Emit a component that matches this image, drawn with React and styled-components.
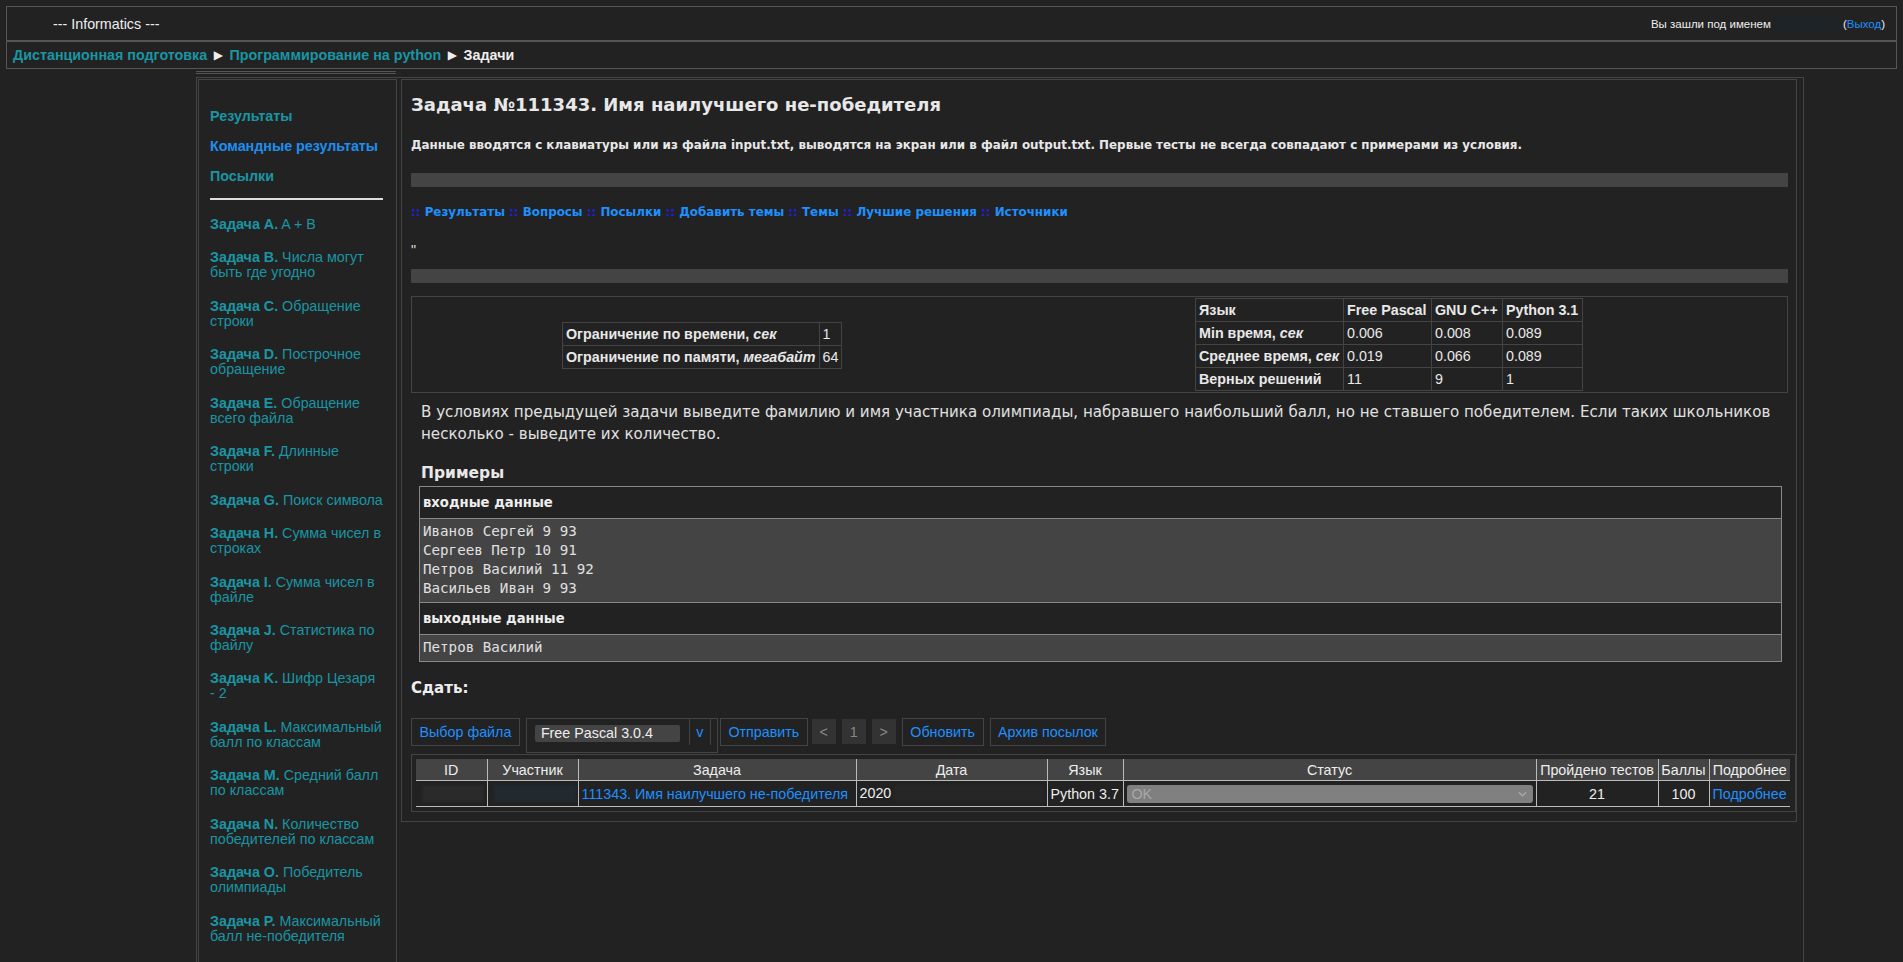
import React from "react";
import styled, { createGlobalStyle } from "styled-components";

const GlobalStyle = createGlobalStyle`
  html, body {
    margin: 0;
    padding: 0;
    background: #222222;
  }
  body {
    font-family: "Liberation Sans", Arial, sans-serif;
    font-size: 14.3px;
    color: #dddddd;
  }
  a {
    text-decoration: none;
    cursor: pointer;
  }
`;

const tasks = [
  ["A", "A + B"],
  ["B", "Числа могут быть где угодно"],
  ["C", "Обращение строки"],
  ["D", "Построчное обращение"],
  ["E", "Обращение всего файла"],
  ["F", "Длинные строки"],
  ["G", "Поиск символа"],
  ["H", "Сумма чисел в строках"],
  ["I", "Сумма чисел в файле"],
  ["J", "Статистика по файлу"],
  ["K", "Шифр Цезаря", "- 2"],
  ["L", "Максимальный балл по классам"],
  ["M", "Средний балл по классам"],
  ["N", "Количество победителей по классам"],
  ["O", "Победитель олимпиады"],
  ["P", "Максимальный балл не-победителя"],
];

const probLinks = ["Результаты", "Вопросы", "Посылки", "Добавить темы", "Темы", "Лучшие решения", "Источники"];

const sampleIn = ["Иванов Сергей 9 93", "Сергеев Петр 10 91", "Петров Василий 11 92", "Васильев Иван 9 93"];

const stats = [
  ["Min время, ", "сек", "0.006", "0.008", "0.089"],
  ["Среднее время, ", "сек", "0.019", "0.066", "0.089"],
  ["Верных решений", "", "11", "9", "1"],
];

const cols = [
  ["ID", 71],
  ["Участник", 91],
  ["Задача", 278],
  ["Дата", 191],
  ["Язык", 76],
  ["Статус", 413],
  ["Пройдено тестов", 122],
  ["Баллы", 51],
  ["Подробнее", 81],
];

const App = () => {
  return (
    <>
      <GlobalStyle />
      <Header>
        <SiteName>--- Informatics ---</SiteName>
        <Login>
          Вы зашли под именем <Hidden w={66} h={14} />
          (<BlueLink>Выход</BlueLink>)
        </Login>
      </Header>
      <Crumbs>
        <TealLink>Дистанционная подготовка</TealLink>
        <Arrow>▶</Arrow>
        <TealLink>Программирование на python</TealLink>
        <Arrow>▶</Arrow>
        <span>Задачи</span>
      </Crumbs>
      <BlockHead />
      <Wrapper>
        <SideBox>
          <MenuLink>Результаты</MenuLink>
          <MenuLink active>Командные результаты</MenuLink>
          <MenuLink>Посылки</MenuLink>
          <MenuRule />
          {tasks.map(([letter, name, tail]) => (
            <TaskLink key={letter}>
              <b>Задача {letter}.</b> {name}
              {tail && (
                <>
                  {" "}
                  <NoWrap>{tail}</NoWrap>
                </>
              )}
            </TaskLink>
          ))}
        </SideBox>
        <Panel>
          <Title>Задача №111343. Имя наилучшего не-победителя</Title>
          <Note>
            Данные вводятся с клавиатуры или из файла input.txt, выводятся на экран или в файл output.txt. Первые тесты не
            всегда совпадают с примерами из условия.
          </Note>
          <GrayBar />
          <ProbMenu>
            {probLinks.map((l) => (
              <React.Fragment key={l}>
                <Sep>::</Sep> <BlueLink>{l}</BlueLink>{" "}
              </React.Fragment>
            ))}
          </ProbMenu>
          <Quote>"</Quote>
          <GrayBar second />
          <LimitsBox>
            <LimitsLeft>
              <Grid>
                <tbody>
                  <tr>
                    <Th>
                      Ограничение по времени, <i>сек</i>
                    </Th>
                    <Td>1</Td>
                  </tr>
                  <tr>
                    <Th>
                      Ограничение по памяти, <i>мегабайт</i>
                    </Th>
                    <Td>64</Td>
                  </tr>
                </tbody>
              </Grid>
            </LimitsLeft>
            <Grid>
              <tbody>
                <tr>
                  <Th w={141}>Язык</Th>
                  <Th w={81}>Free Pascal</Th>
                  <Th w={64}>GNU C++</Th>
                  <Th w={73}>Python 3.1</Th>
                </tr>
                {stats.map((r) => (
                  <tr key={r[0]}>
                    <Th>
                      {r[0]}
                      {r[1] && <i>{r[1]}</i>}
                    </Th>
                    <Td>{r[2]}</Td>
                    <Td>{r[3]}</Td>
                    <Td>{r[4]}</Td>
                  </tr>
                ))}
              </tbody>
            </Grid>
          </LimitsBox>
          <Statement>
            В условиях предыдущей задачи выведите фамилию и имя участника олимпиады, набравшего наибольший балл, но не
            ставшего победителем. Если таких школьников несколько - выведите их количество.
          </Statement>
          <SubTitle>Примеры</SubTitle>
          <Samples>
            <SampleHead>входные данные</SampleHead>
            <SampleData>
              {sampleIn.map((s) => (
                <div key={s}>{s}</div>
              ))}
            </SampleData>
            <SampleHead>выходные данные</SampleHead>
            <SampleData>
              <div>Петров Василий</div>
            </SampleData>
          </Samples>
          <Submit>Сдать:</Submit>
          <Controls>
            <Btn>Выбор файла</Btn>
            <LangGroup>
              <LangField>Free Pascal 3.0.4</LangField>
              <LangToggle>v</LangToggle>
            </LangGroup>
            <Btn>Отправить</Btn>
            <PageBtn first>&lt;</PageBtn>
            <PageBtn>1</PageBtn>
            <PageBtn>&gt;</PageBtn>
            <Btn>Обновить</Btn>
            <Btn>Архив посылок</Btn>
          </Controls>
          <RunsBox>
            <Runs>
              <colgroup>
                {cols.map(([c, w]) => (
                  <col key={c} style={{ width: w }} />
                ))}
              </colgroup>
              <thead>
                <tr>
                  {cols.map(([c]) => (
                    <RunHead key={c}>{c}</RunHead>
                  ))}
                </tr>
              </thead>
              <tbody>
                <tr>
                  <RunCell>
                    <Hidden w={62} h={17} tone="#2a2a2a" />
                  </RunCell>
                  <RunCell>
                    <Hidden w={82} h={17} tone="#222a30" />
                  </RunCell>
                  <RunCell>
                    <BlueLink>111343. Имя наилучшего не-победителя</BlueLink>
                  </RunCell>
                  <RunCell>
                    2020
                    <Hidden w={150} h={17} tone="#262626" />
                  </RunCell>
                  <RunCell>Python 3.7</RunCell>
                  <RunCell>
                    <Status>
                      <span>OK</span>
                      <Chevron viewBox="0 0 10 6">
                        <path d="M1 1l4 4 4-4" />
                      </Chevron>
                    </Status>
                  </RunCell>
                  <RunCell center>21</RunCell>
                  <RunCell center>100</RunCell>
                  <RunCell>
                    <BlueLink>Подробнее</BlueLink>
                  </RunCell>
                </tr>
              </tbody>
            </Runs>
          </RunsBox>
        </Panel>
      </Wrapper>
    </>
  );
};

export default App;

const Header = styled.div`
  margin: 6px 6px 0;
  height: 33px;
  border: 1px solid #555;
  display: flex;
  align-items: center;
  justify-content: space-between;
  padding: 0 11px 0 46px;
`;

const SiteName = styled.div`
  font-size: 14.3px;
  color: #eee;
`;

const Login = styled.div`
  font-size: 11.5px;
  color: #eee;
  display: flex;
  align-items: center;
`;

const Hidden = styled.span`
  display: inline-block;
  width: ${(p) => p.w}px;
  height: ${(p) => p.h}px;
  background: ${(p) => p.tone || "#1d2327"};
  filter: blur(1px);
  margin: 0 3px;
  vertical-align: middle;
`;

const BlueLink = styled.a`
  color: #1e90ff;
`;

const TealLink = styled.a`
  color: #1a95a3;
`;

const NoWrap = styled.span`
  white-space: nowrap;
`;

const Crumbs = styled.div`
  margin: 0 6px;
  height: 26px;
  border: 1px solid #555;
  display: flex;
  align-items: center;
  padding-left: 6px;
  font-size: 14.3px;
  font-weight: bold;
  color: #eee;
`;

const Arrow = styled.span`
  color: #eee;
  font-size: 12px;
  margin: 0 6.5px;
  font-family: "DejaVu Sans", sans-serif;
`;

const BlockHead = styled.div`
  margin: 2px 0 0 196px;
  width: 200px;
  height: 1px;
  border-top: 1px solid #555;
  border-bottom: 1px solid #555;
`;

const Wrapper = styled.div`
  margin: 3px 0 0 196px;
  width: 1608px;
  box-sizing: border-box;
  border: 1px solid #444;
  padding: 1px 6px 0 1px;
  display: flex;
  align-items: flex-start;
`;

const SideBox = styled.div`
  width: 199px;
  flex: none;
  box-sizing: border-box;
  border: 1px solid #444;
  padding: 29px 12px 60px 11px;
  display: flex;
  flex-direction: column;
  font-size: 14.3px;
  line-height: 15px;
`;

const MenuLink = styled.a`
  font-weight: bold;
  color: ${(p) => (p.active ? "#1e8ff0" : "#1a95a3")};
  margin-bottom: 15px;
`;

const MenuRule = styled.div`
  height: 2px;
  background: #ddd;
  width: 173px;
  margin: -1px 0 17px;
`;

const TaskLink = styled.a`
  color: #1a95a3;
  margin-bottom: 18.45px;
  width: 174px;
  b {
    font-weight: bold;
  }
`;

const Panel = styled.div`
  flex: 1;
  margin-left: 4px;
  border: 1px solid #444;
  padding: 0 8px 9px 9px;
`;

const Title = styled.h2`
  margin: 13px 0 0;
  font-family: "DejaVu Sans", sans-serif;
  font-size: 18px;
  line-height: 24px;
  font-weight: bold;
  color: #e8e8e8;
`;

const Note = styled.div`
  margin-top: 20px;
  font-family: "DejaVu Sans", sans-serif;
  font-size: 11.9px;
  line-height: 16px;
  font-weight: bold;
  color: #e8e8e8;
`;

const GrayBar = styled.div`
  height: 14px;
  background: #444;
  margin-top: ${(p) => (p.second ? 11 : 20)}px;
`;

const ProbMenu = styled.div`
  margin-top: 17px;
  font-family: "DejaVu Sans", sans-serif;
  font-size: 11.9px;
  line-height: 16px;
  font-weight: bold;
`;

const Sep = styled.span`
  color: #1e1ee0;
`;

const Quote = styled.div`
  margin-top: 22px;
  line-height: 16px;
  color: #ddd;
`;

const LimitsBox = styled.div`
  margin-top: 13px;
  height: 97px;
  box-sizing: border-box;
  border: 1px solid #444;
  display: flex;
  align-items: flex-start;
  padding-top: 1px;
`;

const LimitsLeft = styled.div`
  width: 783px;
  height: 95px;
  display: flex;
  align-items: center;
  padding-left: 150px;
  box-sizing: border-box;
`;

const Grid = styled.table`
  border-collapse: collapse;
  font-size: 14.3px;
  color: #e8e8e8;
`;

const Th = styled.td`
  border: 1px solid #444;
  padding: 3px 3px;
  font-weight: bold;
  line-height: 16px;
  white-space: nowrap;
  width: ${(p) => (p.w ? `${p.w}px` : "auto")};
`;

const Td = styled.td`
  border: 1px solid #444;
  padding: 3px 3px;
  line-height: 16px;
  white-space: nowrap;
`;

const Statement = styled.p`
  margin: 8px 0 0;
  padding-left: 10px;
  font-family: "DejaVu Sans", sans-serif;
  font-size: 15.1px;
  line-height: 22px;
  color: #e0e0e0;
`;

const SubTitle = styled.h3`
  margin: 18px 0 0 10px;
  font-family: "DejaVu Sans", sans-serif;
  font-size: 15.5px;
  line-height: 20px;
  font-weight: bold;
  color: #e8e8e8;
`;

const Samples = styled.div`
  margin: 3px 6px 0 8px;
  border: 1px solid #888;
`;

const SampleHead = styled.div`
  height: 31px;
  line-height: 31px;
  padding-left: 3px;
  font-family: "DejaVu Sans", sans-serif;
  font-size: 13.2px;
  font-weight: bold;
  color: #eee;
  border-bottom: 1px solid #888;
`;

const SampleData = styled.div`
  background: #444;
  padding: 3px 3px 4px;
  font-family: "DejaVu Sans Mono", monospace;
  font-size: 14.2px;
  line-height: 19px;
  color: #e0e0e0;
  & + div {
    border-top: 1px solid #888;
  }
`;

const Submit = styled.div`
  margin-top: 17px;
  font-family: "DejaVu Sans", sans-serif;
  font-size: 15px;
  line-height: 18px;
  font-weight: bold;
  color: #eee;
`;

const Controls = styled.div`
  margin-top: 21px;
  display: flex;
  align-items: flex-start;
  gap: 6px;
  font-size: 14.3px;
`;

const Btn = styled.a`
  height: 28px;
  box-sizing: border-box;
  border: 1px solid #444;
  padding: 0 7.5px;
  display: flex;
  align-items: center;
  color: #1e90ff;
  white-space: nowrap;
`;

const LangGroup = styled.div`
  height: 35px;
  width: 192px;
  box-sizing: border-box;
  border: 1px solid #444;
  display: flex;
  align-items: flex-start;
  padding: 0 6px 0 0;
  margin-right: -4px;
`;

const LangField = styled.div`
  margin: 6px 0 0 8px;
  width: 145px;
  height: 17px;
  background: #444;
  border-radius: 2px;
  color: #eee;
  line-height: 17px;
  padding-left: 6px;
  box-sizing: border-box;
`;

const LangToggle = styled.div`
  margin-left: 9px;
  height: 26px;
  width: 22px;
  box-sizing: border-box;
  border-left: 1px solid #444;
  border-right: 1px solid #444;
  display: flex;
  align-items: center;
  justify-content: center;
  color: #1e90ff;
`;

const PageBtn = styled.div`
  height: 25px;
  width: 24px;
  background: #333;
  color: #888;
  display: flex;
  align-items: center;
  justify-content: center;
  margin-top: 1px;
  margin-left: ${(p) => (p.first ? -2 : 0)}px;
`;

const RunsBox = styled.div`
  margin: 1px -8px 0 0;
  border: 1px solid #444;
  padding: 4px 4px 4px 4px;
`;

const Runs = styled.table`
  border-collapse: collapse;
  table-layout: fixed;
  width: 1374px;
  font-size: 14.3px;
  color: #eee;
`;

const RunHead = styled.th`
  background: #444;
  font-weight: normal;
  height: 21px;
  padding: 0 1px;
  border: 1px solid #bbb;
  border-top: none;
  white-space: nowrap;
  overflow: hidden;
  &:first-child {
    border-left: none;
  }
  &:last-child {
    border-right: none;
  }
`;

const RunCell = styled.td`
  height: 25px;
  padding: 0 3px;
  border: 1px solid #bbb;
  text-align: ${(p) => (p.center ? "center" : "left")};
  white-space: nowrap;
  overflow: hidden;
  &:first-child {
    border-left: none;
  }
  &:last-child {
    border-right: none;
  }
`;

const Status = styled.div`
  height: 18px;
  background: #808080;
  border-radius: 3px;
  display: flex;
  align-items: center;
  justify-content: space-between;
  padding: 0 6px 0 5px;
  color: #a8a8a8;
`;

const Chevron = styled.svg`
  width: 9px;
  height: 6px;
  fill: none;
  stroke: #aaa;
  stroke-width: 1.5;
`;
